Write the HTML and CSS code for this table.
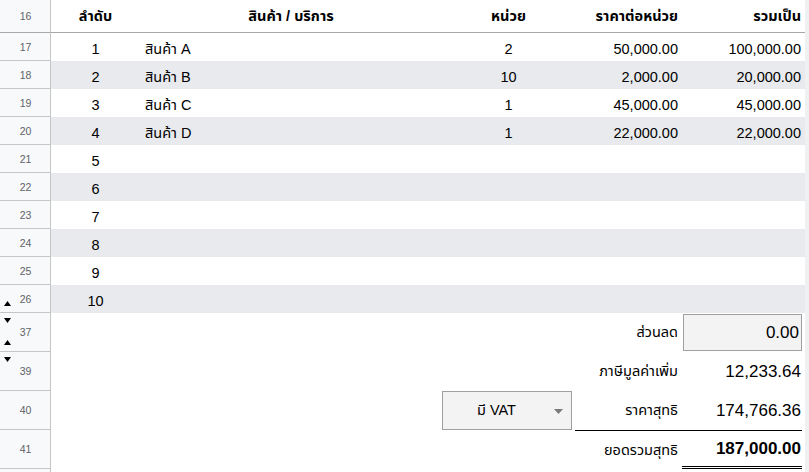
FILE: index.html
```html
<!DOCTYPE html>
<html lang="th">
<head>
<meta charset="utf-8">
<link rel="stylesheet" href="styles.css">
</head>
<body>
<div class="sheet">
  <div class="row hd">
    <div class="rh">16</div>
    <div class="c mid ctr b">ลำดับ</div>
    <div class="c mid ctr b">สินค้า / บริการ</div>
    <div class="c mid ctr b">หน่วย</div>
    <div class="c mid rt b">ราคาต่อหน่วย</div>
    <div class="c mid rt b">รวมเป็น</div>
    <div class="edge"></div>
  </div>

  <div class="row">
    <div class="rh">17</div>
    <div class="c ctr">1</div><div class="c lt">สินค้า A</div><div class="c ctr">2</div>
    <div class="c rt">50,000.00</div><div class="c rt">100,000.00</div><div class="edge"></div>
  </div>
  <div class="row band">
    <div class="rh">18</div>
    <div class="c ctr">2</div><div class="c lt">สินค้า B</div><div class="c ctr">10</div>
    <div class="c rt">2,000.00</div><div class="c rt">20,000.00</div><div class="edge"></div>
  </div>
  <div class="row">
    <div class="rh">19</div>
    <div class="c ctr">3</div><div class="c lt">สินค้า C</div><div class="c ctr">1</div>
    <div class="c rt">45,000.00</div><div class="c rt">45,000.00</div><div class="edge"></div>
  </div>
  <div class="row band">
    <div class="rh">20</div>
    <div class="c ctr">4</div><div class="c lt">สินค้า D</div><div class="c ctr">1</div>
    <div class="c rt">22,000.00</div><div class="c rt">22,000.00</div><div class="edge"></div>
  </div>
  <div class="row">
    <div class="rh">21</div>
    <div class="c ctr">5</div><div class="c"></div><div class="c"></div><div class="c"></div><div class="c"></div><div class="edge"></div>
  </div>
  <div class="row band">
    <div class="rh">22</div>
    <div class="c ctr">6</div><div class="c"></div><div class="c"></div><div class="c"></div><div class="c"></div><div class="edge"></div>
  </div>
  <div class="row">
    <div class="rh">23</div>
    <div class="c ctr">7</div><div class="c"></div><div class="c"></div><div class="c"></div><div class="c"></div><div class="edge"></div>
  </div>
  <div class="row band">
    <div class="rh">24</div>
    <div class="c ctr">8</div><div class="c"></div><div class="c"></div><div class="c"></div><div class="c"></div><div class="edge"></div>
  </div>
  <div class="row">
    <div class="rh">25</div>
    <div class="c ctr">9</div><div class="c"></div><div class="c"></div><div class="c"></div><div class="c"></div><div class="edge"></div>
  </div>
  <div class="row band">
    <div class="rh">26<svg class="tri up-b" width="7" height="5" viewBox="0 0 7 5"><polygon points="0,5 7,5 3.5,0"/></svg></div>
    <div class="c ctr">10</div><div class="c"></div><div class="c"></div><div class="c"></div><div class="c"></div><div class="edge"></div>
  </div>

  <div class="row tall">
    <div class="rh">37<svg class="tri dn-t" width="7" height="5" viewBox="0 0 7 5"><polygon points="0,0 7,0 3.5,5"/></svg><svg class="tri up-b" width="7" height="5" viewBox="0 0 7 5"><polygon points="0,5 7,5 3.5,0"/></svg></div>
    <div class="c"></div><div class="c"></div><div class="c"></div>
    <div class="c mid rt">ส่วนลด</div>
    <div class="c boxcell"><div class="inbox num">0.00</div></div>
    <div class="edge"></div>
  </div>
  <div class="row tall">
    <div class="rh">39<svg class="tri dn-t" width="7" height="5" viewBox="0 0 7 5"><polygon points="0,0 7,0 3.5,5"/></svg></div>
    <div class="c"></div><div class="c"></div><div class="c"></div>
    <div class="c mid rt">ภาษีมูลค่าเพิ่ม</div>
    <div class="c mid rt num">12,233.64</div>
    <div class="edge"></div>
  </div>
  <div class="row tall">
    <div class="rh">40</div>
    <div class="c"></div><div class="c"></div>
    <div class="c ddcell">
      <div class="dropdown"><span>มี VAT</span><svg class="arrow" width="9" height="5" viewBox="0 0 9 5"><polygon points="0,0 9,0 4.5,5"/></svg></div>
    </div>
    <div class="c mid rt">ราคาสุทธิ</div>
    <div class="c mid rt num">174,766.36</div>
    <div class="edge"></div>
  </div>
  <div class="row tall">
    <div class="rh">41</div>
    <div class="c"></div><div class="c"></div><div class="c"></div>
    <div class="c mid rt topline">ยอดรวมสุทธิ</div>
    <div class="c mid rt b num total">187,000.00</div>
    <div class="edge"></div>
  </div>
  <div class="row tail">
    <div class="rh"></div>
    <div class="c"></div><div class="c"></div><div class="c"></div><div class="c"></div><div class="c"></div>
    <div class="edge"></div>
  </div>
</div>
</body>
</html>
```

FILE: styles.css
```css
html, body {
  margin: 0;
  padding: 0;
  background: #ffffff;
}

body {
  font-family: "Liberation Sans", Arial, "Noto Sans Thai", "Noto Sans Thai UI", "Loma", "Garuda", sans-serif;
  font-size: 14.5px;
  color: #000000;
  overflow: hidden;
}

.sheet {
  width: 809px;
  display: flex;
  flex-direction: column;
}

.row {
  display: grid;
  grid-template-columns: 51px 89px 302px 133px 107px 123px 4px;
  height: 28px;
  background: #ffffff;
}

.row.hd { height: 33px; }
.row.tall { height: 39px; }
.row.tail { height: 4px; }

.row.band .c { background: #e8eaed; }

.rh {
  position: relative;
  box-sizing: border-box;
  background: #f8f9fa;
  border-right: 1px solid #c4c7c5;
  border-bottom: 1px solid #c4c7c5;
  display: flex;
  align-items: center;
  justify-content: center;
  font-size: 10.5px;
  color: #5f6368;
  padding-left: 1px;
}

.row.hd .rh { border-bottom-color: #a8a8a8; }

.c {
  box-sizing: border-box;
  display: flex;
  align-items: flex-end;
  padding: 0 4px 3px;
  white-space: nowrap;
  line-height: 17px;
}

.row.hd .c { border-bottom: 1px solid #a8a8a8; }

.c.mid { align-items: center; padding-bottom: 0; }
.c.ctr { justify-content: center; }
.c.rt { justify-content: flex-end; }
.c.lt { padding-left: 5px; }
.b { font-weight: bold; }
.num { font-size: 17px; }

.edge { background: #eef0f2; }

.tri {
  position: absolute;
  left: 4px;
  fill: #000000;
}
.tri.up-b { bottom: 6px; }
.tri.dn-t { top: 5px; }

.c.boxcell {
  padding: 1px 3px 1px 1px;
  align-items: stretch;
}
.inbox {
  flex: 1;
  box-sizing: border-box;
  border: 1px solid #a0a0a0;
  background: #f3f3f3;
  display: flex;
  align-items: center;
  justify-content: flex-end;
  padding-right: 2px;
}

.c.ddcell {
  padding: 0 3px 0 0;
  align-items: stretch;
}
.dropdown {
  flex: 1;
  box-sizing: border-box;
  border: 1px solid #a0a0a0;
  background: #f3f3f3;
  display: flex;
  align-items: center;
  position: relative;
  padding-left: 34px;
}
.dropdown .arrow {
  position: absolute;
  right: 8px;
  top: 17px;
  fill: #7a7a7a;
}

.topline { border-top: 1px solid #000000; }
.total {
  border-top: 1px solid #000000;
  border-bottom: 3px double #000000;
  margin-right: 3px;
  padding-right: 1px;
}
```
